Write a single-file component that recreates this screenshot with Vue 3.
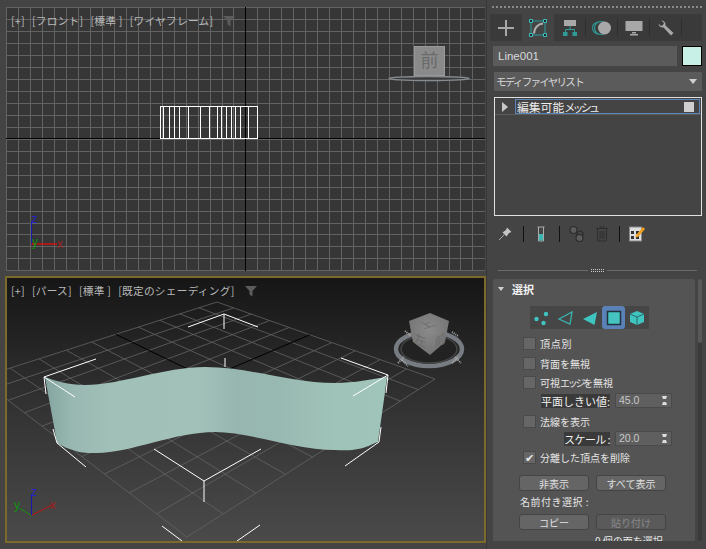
<script setup>
const spacing = 11.95
const frontV = Array.from({ length: 40 }, (_, i) => Math.round(6.4 + i * spacing))
const frontH = Array.from({ length: 23 }, (_, i) => Math.round(7.4 + i * spacing))
const boxX = [160, 163, 169, 174, 179, 188, 200, 209, 217, 221, 226, 231, 235, 240, 248, 257]

// homography from unit square onto the perspective ground grid
const corners = [[217, 302], [435, 379], [187, 537], [-21, 378]]
function makeH([p0, p1, p2, p3]) {
  const dx1 = p1[0] - p2[0], dx2 = p3[0] - p2[0], sx = p0[0] - p1[0] + p2[0] - p3[0]
  const dy1 = p1[1] - p2[1], dy2 = p3[1] - p2[1], sy = p0[1] - p1[1] + p2[1] - p3[1]
  const d = dx1 * dy2 - dx2 * dy1
  const g = (sx * dy2 - dx2 * sy) / d
  const h = (dx1 * sy - sx * dy1) / d
  return (u, v) => {
    const w = g * u + h * v + 1
    return [
      ((p1[0] - p0[0] + g * p1[0]) * u + (p3[0] - p0[0] + h * p3[0]) * v + p0[0]) / w,
      ((p1[1] - p0[1] + g * p1[1]) * u + (p3[1] - p0[1] + h * p3[1]) * v + p0[1]) / w
    ]
  }
}
const H = makeH(corners)
const N = 10
const groundLines = []
for (let i = 0; i <= N; i++) {
  if (i === N / 2) continue
  const t = i / N
  const a = H(t, 0), b = H(t, 1), c = H(0, t), e = H(1, t)
  groundLines.push([a, b], [c, e])
}
const axisA = [H(0, 0.5), H(1, 0.5)]
const axisB = [H(0.5, 0), H(0.5, 1)]
const seg = (l) => ({ x1: l[0][0], y1: l[0][1], x2: l[1][0], y2: l[1][1] })

const brackets = [
  'M96 359L44 377L46 394', 'M44 377L75 397',
  'M53 429L57 443L86 467',
  'M154 449L204 481L261 449', 'M204 481V502',
  'M188 327L224 314L258 327', 'M224 314V329', 'M225 358V367',
  'M341 358L388 375L386 393', 'M388 375L353 396',
  'M381 427L379 442L345 466',
  'M162 526L182 541', 'M237 541L260 525'
]

const subIcons = [
  { key: 'v' }, { key: 'e' }, { key: 'f' }, { key: 'p', on: true }, { key: 'b' }
]
</script>

<template>
  <div class="app">
    <div class="left">
      <section class="vp front">
        <svg class="scene" viewBox="6 7 479 264" width="479" height="264">
          <line v-for="x in frontV" :key="'v' + x" :x1="x + .5" :x2="x + .5" y1="7" y2="271" stroke="#626262" />
          <line v-for="y in frontH" :key="'h' + y" x1="6" x2="485" :y1="y + .5" :y2="y + .5" stroke="#626262" />
          <line x1="245.5" x2="245.5" y1="7" y2="271" stroke="#000" />
          <line x1="6" x2="485" y1="138.5" y2="138.5" stroke="#000" />
          <rect x="160.5" y="106.5" width="97" height="32" fill="none" stroke="#fff" />
          <line v-for="x in boxX" :key="'b' + x" :x1="x + .5" :x2="x + .5" y1="106.5" y2="138.5" stroke="#fff" />
          <rect x="414.500" y="46.500" width="30" height="29" fill="#8a8a8a" stroke="#9a9a9a" />
          <text x="429.5" y="67" text-anchor="middle" class="cube-t front-t">前</text>
          <ellipse cx="429" cy="78.500" rx="40" ry="2" fill="#3a3a3a" stroke="#868b90" stroke-width="1.500" />
          <line x1="31.5" y1="244.5" x2="31.5" y2="221" stroke="#1818b0" />
          <line x1="31.5" y1="244" x2="57" y2="244" stroke="#d01010" stroke-width="1.5" />
          <text x="31.500" y="223" class="ax" fill="#2626c8">z</text>
          <text x="57" y="248" class="ax" fill="#a02020">x</text>
          <text x="32" y="246" class="ax" fill="#119011">y</text>
        </svg>
        <div class="vp-label">
          <span>[+]</span><span>[フロント]</span><span>[標準 ]</span><span>[ワイヤフレーム]</span>
          <svg class="filter" viewBox="0 0 12 12" width="12" height="12"><path d="M0 1H12L7.5 6V11.5L4.5 9.5V6Z" fill="#5c5c5c" /></svg>
        </div>
      </section>

      <section class="vp persp">
        <svg class="scene" viewBox="7 278 477 263" width="477" height="263">
          <defs>
            <linearGradient id="sky" x1="0" y1="0" x2="0" y2="1">
              <stop offset="0" stop-color="#161616" />
              <stop offset="0.5" stop-color="#333" />
              <stop offset="1" stop-color="#4a4a4a" />
            </linearGradient>
            <linearGradient id="rib" gradientUnits="userSpaceOnUse" x1="45" y1="0" x2="388" y2="0">
              <stop offset="0" stop-color="#84a4a0" />
              <stop offset="0.08" stop-color="#98b8b1" />
              <stop offset="0.2" stop-color="#a0c0b8" />
              <stop offset="0.45" stop-color="#a1c1b9" />
              <stop offset="0.56" stop-color="#96b6af" />
              <stop offset="0.68" stop-color="#98b9b1" />
              <stop offset="0.85" stop-color="#a0c3b9" />
              <stop offset="1" stop-color="#9fc4ba" />
            </linearGradient>
            <radialGradient id="cubeg" cx="0.5" cy="0.4" r="0.6">
              <stop offset="0" stop-color="#8a8a8a" />
              <stop offset="1" stop-color="#747474" />
            </radialGradient>
          </defs>
          <rect x="7" y="278" width="477" height="263" fill="url(#sky)" />
          <line v-for="(l, i) in groundLines" :key="i" v-bind="seg(l)" stroke="#636363" stroke-width=".8" />
          <line v-bind="seg(axisA)" stroke="#000" />
          <line v-bind="seg(axisB)" stroke="#000" />
          <path d="M45 377C56 381 68 385 85 385C120 385 165 367 205 367C250 367 290 383 335 383C355 383 372 379 387 377C384 400 381 420 378 442C372 444 366 448 358 449C350 451 342 450 335 450C295 450 250 432 215 432C175 432 130 453 97 453C88 453 82 453 76 451C68 449 62 446 57 443C53 420 49 400 45 377Z" fill="url(#rib)" />
          <path v-for="(d, i) in brackets" :key="'k' + i" :d="d" fill="none" stroke="#fff" />

          <ellipse cx="429" cy="349" rx="33" ry="17" fill="none" stroke="#777c82" stroke-width="4.500" />
          <ellipse cx="429" cy="349" rx="28" ry="14" fill="#222" stroke="#444" stroke-width="1.5" />
          <path d="M430 313L449 321L445 342L430 355L413 342L409 321Z" fill="url(#cubeg)" />
          <text class="cube-t" transform="matrix(.9 -.3 .8 .45 430 327)" text-anchor="middle">上</text>
          <text class="cube-t" transform="matrix(.8 .35 0 .95 420 345)" text-anchor="middle">左</text>
          <text class="cube-t" transform="matrix(.8 -.4 0 .95 440 345)" text-anchor="middle">前</text>
          <path d="M402 360L408 366M398 363L404 357M455 357L461 363M452 363L458 357M405 331L411 336M452 332L458 336" stroke="#aaa" stroke-dasharray="1 1" stroke-width="2" />

          <line x1="31.5" y1="515.5" x2="31.5" y2="494" stroke="#1818b0" />
          <line x1="31.5" y1="515.5" x2="52" y2="505" stroke="#c01212" />
          <line x1="31.5" y1="515.5" x2="19" y2="508" stroke="#129012" />
          <text x="31" y="496" class="ax" fill="#2626c8">z</text>
          <text x="50" y="509" class="ax" fill="#a02020">x</text>
          <text x="14" y="509" class="ax" fill="#119011">y</text>
        </svg>
        <div class="vp-label">
          <span>[+]</span><span>[パース]</span><span>[標準 ]</span><span>[既定のシェーディング]</span>
          <svg class="filter" viewBox="0 0 12 12" width="12" height="12"><path d="M0 1H12L7.5 6V11.5L4.5 9.5V6Z" fill="#5c5c5c" /></svg>
        </div>
      </section>
    </div>

    <aside class="panel">
      <div class="dots"></div>
      <nav class="tabs">
        <div class="tab">
          <svg viewBox="0 0 18 18" width="18" height="18"><path d="M9 1V17M1 9H17" stroke="#a8a8a8" stroke-width="2" /></svg>
        </div>
        <div class="tab on">
          <svg viewBox="0 0 18 18" width="18" height="18">
            <path d="M2 2H16V16H2Z" fill="none" stroke="#2f9a98" />
            <path d="M0.5 .5h3v3h-3zM14.500 .5h3v3h-3zM.5 14.500h3v3h-3zM14.500 14.500h3v3h-3z" fill="#222" stroke="#3ec0bc" />
            <path d="M5 14.500C5 9 9 5 14 4.500" fill="none" stroke="#b0b0b0" stroke-width="2.200" />
          </svg>
        </div>
        <div class="tab">
          <svg viewBox="0 0 14 16" width="14" height="16">
            <rect x="1" y="0" width="12" height="6" fill="#a8a8a8" />
            <path d="M7 6V9.500M2.500 12.500V9.500H11.500V12.500" fill="none" stroke="#2f9a98" />
            <rect x="0" y="12" width="4.500" height="4" fill="#2f9a98" /><rect x="9.500" y="12" width="4.500" height="4" fill="#2f9a98" />
          </svg>
        </div>
        <div class="tab">
          <svg viewBox="0 0 20 16" width="20" height="16">
            <circle cx="6.500" cy="8" r="6" fill="none" stroke="#2f8f8c" stroke-width="1.200" />
            <circle cx="9" cy="8" r="6.500" fill="#3a3a3a" stroke="#2f9a98" stroke-width="1.200" />
            <circle cx="12.500" cy="8" r="6.500" fill="#a8a8a8" />
          </svg>
        </div>
        <div class="tab">
          <svg viewBox="0 0 18 16" width="18" height="16">
            <rect x="0.500" y="1" width="17" height="10" fill="#a8a8a8" />
            <path d="M7 12h4v1.500H7zM5 14h8v1.500H5z" fill="#a8a8a8" />
          </svg>
        </div>
        <div class="tab">
          <svg viewBox="0 0 16 16" width="16" height="16">
            <path d="M.5 3.500C.5 6 3 8 5.500 7.500L13 15.500L15.500 13L7.500 5.500C8 3 6 .5 3.500 .5L6 3L5 5L3 6Z" fill="#a8a8a8" />
          </svg>
        </div>
      </nav>

      <div class="name-row">
        <div class="field name">Line001</div>
        <div class="swatch"></div>
      </div>
      <div class="field combo"><span class="combo-t">モディファイヤリスト</span><i class="down"></i></div>

      <div class="stack">
        <div class="stack-row">
          <svg viewBox="0 0 8 10" width="8" height="10"><path d="M1 0L7 5L1 10Z" fill="#c8c8c8" /></svg>
          <div class="stack-sel"><span>編集可能<span class="kana">メッシュ</span></span><b></b></div>
        </div>
      </div>

      <div class="tools">
        <svg viewBox="0 0 16 16" width="16" height="16">
          <path d="M2 14L7 9" stroke="#aaa" /><path d="M10 1.500L14.500 6L12 7L9.500 10.500L5.500 6.500L9 4Z" fill="#c4c4c4" />
        </svg>
        <i class="sep"></i>
        <svg viewBox="0 0 16 16" width="16" height="16">
          <path d="M4.500 1H11.500M5.500 1V15H10.500V1" fill="none" stroke="#aaa" /><rect x="6" y="8" width="4" height="6.500" fill="#3cb6b2" />
        </svg>
        <i class="sep"></i>
        <svg viewBox="0 0 17 16" width="17" height="16">
          <g fill="none" stroke="#2c2c2c" stroke-width="1.2"><circle cx="4.500" cy="4" r="3.500" fill="#5c5c5c" /><circle cx="11" cy="8" r="3" /><circle cx="10.500" cy="12" r="3.500" fill="#5c5c5c" /></g>
        </svg>
        <svg class="trash" viewBox="0 0 14 16" width="14" height="16">
          <path d="M1 2.500H13M5 2.500V1H9V2.500M2.500 3V15H11.500V3M5 5V13M7 5V13M9 5V13" fill="none" stroke="#2e2e2e" />
        </svg>
        <i class="sep"></i>
        <svg viewBox="0 0 16 16" width="16" height="16">
          <rect x=".5" y="1" width="12" height="14" fill="#ddd" stroke="#888" />
          <path d="M2 5h3v3H2zM7 5h3v3H7zM2 10h3v3H2zM7 10h3v3H7z" fill="#333" />
          <path d="M7 9L14 1L16 3L9 11L6.500 11.500Z" fill="#f0a020" />
        </svg>
      </div>

      <div class="divider"><i></i><em></em><i></i></div>

      <div class="roll-wrap">
        <div class="rollout">
          <header class="roll-head">
            <i class="down hd"></i>
            <strong>選択</strong>
            <span class="grip"></span>
          </header>
          <div class="sub-row">
            <button v-for="s in subIcons" :key="s.key" class="sub" :class="{ on: s.on }">
              <svg viewBox="0 0 16 16" width="16" height="16">
                <g v-if="s.key === 'v'" fill="#3fc4c0"><circle cx="2.500" cy="9" r="2.200" /><circle cx="12" cy="4" r="2.200" /><circle cx="9.500" cy="13" r="2.200" /></g>
                <path v-else-if="s.key === 'e'" d="M1 9L14 2L12 14Z" fill="none" stroke="#3ab4b0" stroke-width="1.300" />
                <path v-else-if="s.key === 'f'" d="M1 9L15 2L12.500 15Z" fill="#3fc4c0" />
                <rect v-else-if="s.key === 'p'" x="1.500" y="1.500" width="13" height="13" fill="#45c4c2" stroke="#22323a" stroke-width="1.500" />
                <g v-else><path d="M8 1L15 4V12L8 15L1 12V4Z" fill="#3fc4c0" /><path d="M1 4L8 7L15 4M8 7V15" fill="none" stroke="#2a6a6a" /></g>
              </svg>
            </button>
          </div>

          <label class="check c1"><i></i><span class="wide-t">頂点別</span></label>
          <label class="check c2"><i></i>背面を無視</label>
          <label class="check c3"><i></i><span>可視<span class="tight">エッジ</span>を無視</span></label>
          <div class="spin s1"><span class="spin-l">平面しきい値:</span><div class="spin-f">45.0<u></u></div></div>
          <label class="check c4"><i></i>法線を表示</label>
          <div class="spin s2"><span class="spin-l scale-l">スケール :</span><div class="spin-f">20.0<u></u></div></div>
          <label class="check c5"><i class="ticked">✔</i>分離した頂点を削除</label>

          <div class="btns b1"><button>非表示</button><button>すべて表示</button></div>
          <div class="named">名前付き選択 :</div>
          <div class="btns b2"><button>コピー</button><button class="off">貼り付け</button></div>
          <div class="count">0 個の面を選択</div>
        </div>
        <div class="scroll"><i></i></div>
      </div>
    </aside>
  </div>
</template>

<style scoped>
* { box-sizing: border-box; }
.app {
  width: 706px; height: 549px; display: flex; overflow: hidden;
  background: #444;
  font-family: "Noto Sans CJK JP", "Liberation Sans", sans-serif;
  color: #ddd;
}
.left { width: 487px; padding: 7px 0 0 5px; display: flex; flex-direction: column; gap: 5px; flex: none; }
.vp { position: relative; overflow: hidden; flex: none; }
.front { width: 479px; height: 264px; margin-left: 1px; background: #363636; }
.persp { width: 481px; height: 267px; border: 2px solid #7b6a2c; }
.scene { display: block; }
.vp-label {
  position: absolute; left: 5px; top: 7px;
  display: flex; align-items: center; gap: 7px;
  font-size: 10.7px; letter-spacing: .25px; line-height: 14px; color: #b9b9b9;
}
.persp .vp-label { left: 4px; top: 6px; }
.filter { margin-left: 3px; }
.cube-t { font-family: "Noto Sans CJK JP", sans-serif; font-size: 14px; fill: #6c6c6c; }
.front-t { font-size: 18px; fill: #6a6a6a; }
.ax { font-family: "Liberation Sans", sans-serif; font-size: 12px; }

.panel { flex: 1; padding: 6px 4px 0 6px; display: flex; flex-direction: column; border-left: 1px solid #383838; margin-left: -1px; }
.dots { height: 2px; border-top: 2px dotted #8a8a8a; margin: 0 0 6px -1px; }
.tabs { height: 27px; background: #3a3a3a; display: flex; margin-left: -3px; }
.tab { width: 32px; display: flex; align-items: center; justify-content: center; position: relative; flex: none; }
.tab.on { background: #444; }
.tab + .tab:not(.on)::after { content: ""; position: absolute; right: 0; top: 5px; bottom: 5px; width: 1px; background: #2e2e2e; }
.name-row { display: flex; justify-content: space-between; margin-top: 5px; }
.field { background: #5b5b5b; font-size: 10.5px; color: #d8d8d8; display: flex; align-items: center; padding-left: 5px; }
.name { width: 184px; height: 20px; font-family: "Liberation Sans", sans-serif; font-size: 11.5px; }
.swatch { width: 20px; height: 20px; background: #c8f0e6; border: 1px solid #000; }
.combo { height: 19px; margin: 6px 0 0 1px; justify-content: space-between; padding: 0 5px 0 2px; }
.combo-t { letter-spacing: -1.7px; }
.down { width: 0; height: 0; border-left: 4px solid transparent; border-right: 4px solid transparent; border-top: 5px solid #d0d0d0; }
.stack { height: 119px; margin: 6px 0 0 1px; border: 1px solid #e0e0e0; background: #444; }
.stack-row { height: 17px; display: flex; align-items: center; padding: 1px 1px 0 6px; border-bottom: 1px solid #5c5c5c; gap: 6px; }
.stack-sel { flex: 1; height: 15px; border: 1px solid #5c86b8; display: flex; align-items: center; justify-content: space-between; padding: 0 5px 0 1px; font-size: 11.8px; color: #eee; }
.kana { font-size: 11px; letter-spacing: -2.7px; }
.stack-sel b { width: 10px; height: 10px; background: #cfcfcf; }
.tools { height: 16px; margin-top: 10px; padding-left: 4px; display: flex; align-items: center; }
.tools .sep { width: 1px; height: 16px; background: #111; margin: 0 9px 0 10px; }
.tools .trash { margin-left: 9px; }
.divider { height: 3px; margin: 27px 5px 0 5px; display: flex; align-items: center; gap: 3px; }
.divider i { flex: 1; height: 1px; background: #6a6a6a; }
.divider em { width: 13px; height: 3px; border-top: 1px dotted #ccc; border-bottom: 1px dotted #ccc; }
.roll-wrap { height: 262px; margin-top: 7px; display: flex; gap: 3px; }
.rollout { width: 202px; height: 262px; overflow: hidden; background: #545454; border-radius: 3px 3px 0 0; display: flex; flex-direction: column; align-items: flex-start; font-size: 10px; color: #e6e6e6; flex: none; }
.roll-head { width: 100%; height: 18px; display: flex; align-items: center; padding: 1px 8px 0 5px; gap: 8px; flex: none; }
.roll-head strong { font-size: 11px; color: #f2f2f2; flex: 1; }
.grip { width: 6px; height: 6px; background: radial-gradient(circle, #888 45%, transparent 50%) 0 0 / 2px 2px; }
.hd { border-left-width: 3px; border-right-width: 3px; border-top-width: 4px; }
.sub-row { display: flex; margin: 9px 0 0 37px; background: #464646; flex: none; }
.sub { width: 24px; height: 23px; padding: 0; border: 0; background: transparent; display: flex; align-items: center; justify-content: center; }
.sub.on { background: #5a82b6; border-radius: 3px; width: 23px; }
.check { display: flex; align-items: center; gap: 4px; height: 13px; margin-left: 30px; line-height: 13px; flex: none; white-space: nowrap; }
.check i { width: 13px; height: 13px; background: #666; border: 1px solid #4a4a4a; display: flex; align-items: center; justify-content: center; font-style: normal; font-size: 11px; color: #e8e8e8; flex: none; }
.wide-t { letter-spacing: .7px; }
.tight { letter-spacing: -2.300px; }
.c1 { margin-top: 8px; }
.c2 { margin-top: 7px; }
.c3 { margin-top: 6px; }
.c4 { margin-top: 7px; }
.c5 { margin-top: 5px; }
.spin { width: 179px; display: flex; justify-content: flex-end; align-items: center; gap: 5px; height: 15px; flex: none; }
.s1 { margin-top: 4px; }
.s2 { margin-top: 3px; }
.spin-l { background: #3a3a3a; font-size: 11px; line-height: 14px; color: #f0f0f0; }
.scale-l { letter-spacing: -.6px; }
.spin-f { width: 57px; height: 15px; background: #5f5f5f; border: 1px solid #4a4a4a; font-family: "Liberation Sans", sans-serif; font-size: 10.500px; color: #c9c9c9; padding-left: 3px; line-height: 13px; position: relative; }
.spin-f u { position: absolute; right: 4px; top: 2px; width: 5px; height: 9px; border-top: 3px solid #ddd; border-bottom: 3px solid #ddd; border-left: 1px solid transparent; border-right: 1px solid transparent; text-decoration: none; }
.btns { display: flex; gap: 7px; margin-left: 26px; flex: none; }
.btns button { width: 70px; height: 16px; padding: 0; border: 1px solid #444; border-radius: 3px; background: #656565; color: #e0e0e0; font: 10px "Noto Sans CJK JP", sans-serif; line-height: 13px; }
.btns .off { background: #5a5a5a; color: #888; }
.b1 { margin-top: 11px; }
.named { margin: 5px 0 0 27px; height: 12px; line-height: 12px; letter-spacing: .5px; flex: none; }
.b2 { margin-top: 6px; }
.count { margin: 5px 0 0 102px; line-height: 12px; white-space: nowrap; flex: none; }
.scroll { width: 4px; height: 262px; background: #3a3a3a; border-radius: 2px; flex: none; }
.scroll i { display: block; height: 64px; background: #585858; border-radius: 2px; }
</style>
